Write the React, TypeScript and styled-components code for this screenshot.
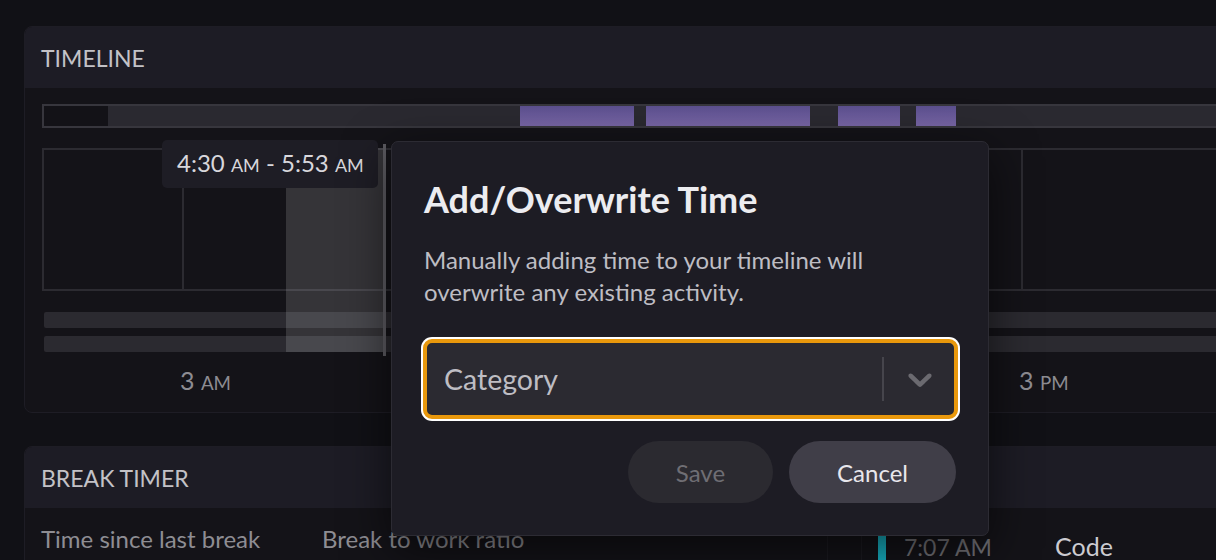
import styled, { createGlobalStyle } from "styled-components";

const GlobalStyle = createGlobalStyle`
  html, body {
    margin: 0;
    padding: 0;
    background: #111116;
  }
  body {
    font-family: Lato, "Noto Sans", sans-serif;
    color: #d8d7dc;
  }
`;

type SegKind = "empty" | "idle" | "active";

const overview: { w: number | null; kind: SegKind }[] = [
  { w: 64, kind: "empty" },
  { w: 412, kind: "idle" },
  { w: 114, kind: "active" },
  { w: 12, kind: "idle" },
  { w: 164, kind: "active" },
  { w: 28, kind: "idle" },
  { w: 62, kind: "active" },
  { w: 16, kind: "idle" },
  { w: 40, kind: "active" },
  { w: null, kind: "idle" },
];

const Page = styled.div`
  position: relative;
  width: 1216px;
  height: 560px;
  overflow: hidden;
  background: #111116;
`;

const Stack = styled.div`
  display: flex;
  flex-direction: column;
  gap: 33px;
  padding: 26px 0 0 24px;
  width: 1240px;
`;

const Card = styled.section`
  background: #141318;
  border: 1px solid #1e1d25;
  border-radius: 8px;
  overflow: hidden;
`;

const CardHeader = styled.header`
  height: 61px;
  display: flex;
  align-items: center;
  padding: 0 16px;
  background: #1d1c25;
  font-size: 23px;
  color: #c3c2c7;
  text-transform: uppercase;
`;

const TimelineBody = styled.div`
  padding: 16px 0 19px 17px;
`;

const OverviewBar = styled.div`
  display: flex;
  height: 20px;
  border: 2px solid #37363d;
  border-right: none;
  background: #2a2930;
`;

const Segment = styled.div<{ $kind: SegKind }>`
  flex: 0 0 auto;
  background: ${(p) =>
    p.$kind === "empty"
      ? "#131217"
      : p.$kind === "active"
      ? "linear-gradient(#5b4f8e, #7866a6)"
      : "#2a2930"};
  &:last-child {
    flex: 1;
  }
`;

const ChartWrap = styled.div`
  position: relative;
  margin-top: 20px;
`;

const Grid = styled.div`
  display: grid;
  grid-template-columns: 138px 839px 1fr;
  height: 139px;
  border: 2px solid #2c2b31;
  border-right: none;
`;

const GridCell = styled.div`
  & + & {
    border-left: 2px solid #2c2b31;
  }
`;

const Bars = styled.div`
  display: flex;
  flex-direction: column;
  gap: 8px;
  margin: 21px 0 0 2px;
`;

const Bar = styled.div`
  height: 16px;
  border-radius: 2px;
  background: #2b2a30;
`;

const Labels = styled.div`
  display: grid;
  grid-template-columns: 140px 839px 1fr;
  margin-top: 11px;
  font-size: 25px;
  line-height: 30px;
  height: 30px;
  color: #8d8c92;
`;

const Label = styled.div`
  margin-left: -2px;
  padding-top: 2px;
`;

const Small = styled.span`
  font-size: 0.75em;
  line-height: 1;
`;

const Selection = styled.div`
  position: absolute;
  left: 244px;
  top: 0;
  width: 97px;
  height: 204px;
  background: rgba(255, 255, 255, 0.14);
`;

const Cursor = styled.div`
  position: absolute;
  left: 341px;
  top: -4px;
  width: 3px;
  height: 212px;
  background: #5d5c62;
`;

const Tooltip = styled.div`
  position: absolute;
  left: 120px;
  top: -8px;
  width: 216px;
  height: 48px;
  box-sizing: border-box;
  padding: 9px 0 0 15px;
  border-radius: 5px;
  background: #1e1d25;
  color: #d8d7dc;
  font-size: 24px;
  line-height: 28px;
  white-space: nowrap;
`;

const BreakBody = styled.div`
  display: flex;
  height: 60px;
  padding-left: 16px;
  font-size: 24px;
  line-height: 28px;
  color: #8e8d93;
`;

const Stat = styled.div<{ $w: number }>`
  flex: 0 0 ${(p) => p.$w}px;
  padding-top: 17px;
`;

const RightPane = styled.div`
  display: flex;
  flex: 1;
  border-left: 1px solid #1c1b21;
`;

const Rail = styled.div`
  width: 33px;
  border-right: 1px solid #1c1b21;
`;

const Entry = styled.div`
  display: flex;
  align-items: baseline;
  margin: 23px 0 0 16px;
  padding-left: 18px;
  border-left: 8px solid #17b4c6;
  height: 40px;
`;

const EntryTime = styled.span`
  width: 151px;
  font-size: 23px;
  line-height: 30px;
  color: #747379;
`;

const EntryName = styled.span`
  font-size: 25px;
  line-height: 30px;
  color: #cccbd0;
`;

const Modal = styled.div`
  position: absolute;
  left: 391px;
  top: 141px;
  width: 598px;
  box-sizing: border-box;
  padding: 37px 32px 32px;
  background: #1d1c24;
  border: 1px solid #2c2b33;
  border-radius: 7px;
  box-shadow: 0 14px 48px rgba(0, 0, 0, 0.6);
`;

const Title = styled.h2`
  margin: 0;
  font-size: 36px;
  line-height: 40px;
  font-weight: 700;
  color: #ececf0;
`;

const Description = styled.p`
  margin: 25px 0 0;
  font-size: 24px;
  line-height: 32px;
  color: #bebdc3;
`;

const Select = styled.div`
  display: flex;
  align-items: center;
  height: 80px;
  box-sizing: border-box;
  margin: 31px -2px 0 -1px;
  border: 4px solid #e9980c;
  border-radius: 9px;
  box-shadow: 0 0 0 2px #ffffff;
  background: #2b2a31;
`;

const Placeholder = styled.span`
  flex: 1;
  padding-left: 17px;
  font-size: 28.5px;
  color: #bebdc3;
`;

const Separator = styled.span`
  width: 2px;
  height: 44px;
  background: #46454c;
`;

const Indicator = styled.span`
  display: flex;
  padding: 0 14px 0 16px;
  color: #6b6a70;
`;

const Actions = styled.div`
  display: flex;
  justify-content: flex-end;
  gap: 16px;
  margin-top: 22px;
`;

const Button = styled.button<{ $primary?: boolean }>`
  height: 62px;
  padding: 0 48px;
  border: none;
  border-radius: 31px;
  font-family: inherit;
  font-size: 24px;
  background: ${(p) => (p.$primary ? "#403e48" : "#2b2a30")};
  color: ${(p) => (p.$primary ? "#e8e7ec" : "#6f6e74")};
`;

export default function App() {
  return (
    <Page>
      <GlobalStyle />
      <Stack>
        <Card>
          <CardHeader>Timeline</CardHeader>
          <TimelineBody>
            <OverviewBar>
              {overview.map((s, i) => (
                <Segment key={i} $kind={s.kind} style={s.w ? { width: s.w } : undefined} />
              ))}
            </OverviewBar>
            <ChartWrap>
              <Grid>
                <GridCell />
                <GridCell />
                <GridCell />
              </Grid>
              <Bars>
                <Bar />
                <Bar />
              </Bars>
              <Selection />
              <Cursor />
              <Tooltip>
                4:30 <Small>AM</Small> - 5:53 <Small>AM</Small>
              </Tooltip>
            </ChartWrap>
            <Labels>
              <div />
              <Label>
                3 <Small>AM</Small>
              </Label>
              <Label>
                3 <Small>PM</Small>
              </Label>
            </Labels>
          </TimelineBody>
        </Card>
        <Card>
          <CardHeader>Break Timer</CardHeader>
          <BreakBody>
            <Stat $w={281}>Time since last break</Stat>
            <Stat $w={505}>Break to work ratio</Stat>
            <RightPane>
              <Rail />
              <Entry>
                <EntryTime>7:07 AM</EntryTime>
                <EntryName>Code</EntryName>
              </Entry>
            </RightPane>
          </BreakBody>
        </Card>
      </Stack>
      <Modal>
        <Title>Add/Overwrite Time</Title>
        <Description>
          Manually adding time to your timeline will overwrite any existing activity.
        </Description>
        <Select>
          <Placeholder>Category</Placeholder>
          <Separator />
          <Indicator>
            <svg width="40" height="40" viewBox="0 0 20 20" fill="currentColor">
              <path d="M4.516 7.548c0.436-0.446 1.043-0.481 1.576 0l3.908 3.747 3.908-3.747c0.533-0.481 1.141-0.446 1.574 0 0.436 0.445 0.408 1.197 0 1.615-0.406 0.418-4.695 4.502-4.695 4.502-0.217 0.223-0.502 0.335-0.787 0.335s-0.57-0.112-0.789-0.335c0 0-4.287-4.084-4.695-4.502s-0.436-1.17 0-1.615z" />
            </svg>
          </Indicator>
        </Select>
        <Actions>
          <Button>Save</Button>
          <Button $primary>Cancel</Button>
        </Actions>
      </Modal>
    </Page>
  );
}
